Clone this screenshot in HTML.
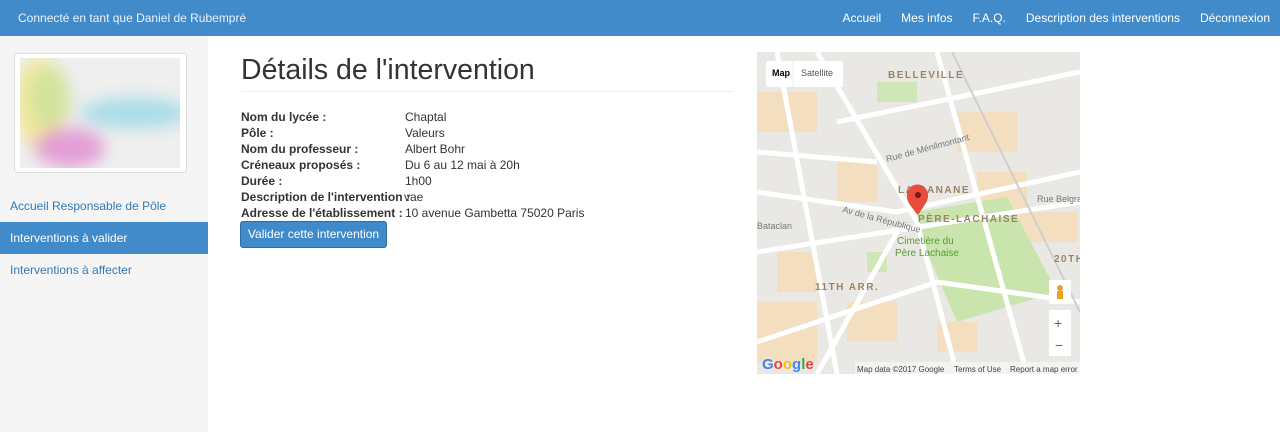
<!DOCTYPE html>
<html><head><meta charset="utf-8"><style>
*{margin:0;padding:0;box-sizing:border-box}
body{width:1280px;height:432px;overflow:hidden;font-family:"Liberation Sans",sans-serif;background:#fff;position:relative;font-size:12px;color:#333}
.nav{position:absolute;left:0;top:0;width:1280px;height:36px;background:#428bca;color:#fff;font-size:12px}
.nav .l{position:absolute;left:18px;top:11px;color:#eaf2fa}
.nav .r{position:absolute;right:10px;top:11px;color:#fff}
.nav .r span{margin-left:20px}
.side{position:absolute;left:0;top:36px;width:208px;height:396px;background:#f5f5f5}
.thumb{position:absolute;left:14px;top:17px;width:173px;height:120px;background:#fff;border:1px solid #ddd;border-radius:3px;overflow:hidden}
.thumb .i{position:absolute;left:5px;top:4px;width:160px;height:110px;background:#efefef;overflow:hidden}
.blob{position:absolute;border-radius:50%;filter:blur(8px)}
.side a{position:absolute;left:0;width:208px;height:32px;padding:9px 10px;color:#337ab7;font-size:12px;text-decoration:none}
.side a.act{background:#428bca;color:#fff}
h1{position:absolute;left:241px;top:54px;font-size:28.5px;font-weight:400;color:#333;white-space:nowrap}
.hr{position:absolute;left:241px;top:91px;width:493px;border-top:1px solid #eee}
.dl{position:absolute;left:241px;top:109px;line-height:16px;width:500px}
.dl div{position:relative;height:16px;white-space:nowrap}
.dl b{font-weight:bold}
.dl span{position:absolute;left:164px;top:0;white-space:nowrap}
.btn{position:absolute;left:240px;top:221px;width:147px;height:27px;background:#3f8acb;border:1px solid #2e6da4;border-radius:3px;color:#fff;font-size:12px;text-align:center;line-height:25px}
.map{position:absolute;left:757px;top:52px;width:323px;height:322px;overflow:hidden;background:#e8e8e6}
</style></head><body>
<div class="nav"><div class="l">Connecté en tant que Daniel de Rubempré</div>
<div class="r"><span>Accueil</span><span>Mes infos</span><span>F.A.Q.</span><span>Description des interventions</span><span>Déconnexion</span></div></div>
<div class="side">
<div class="thumb"><div class="i">
<div class="blob" style="left:-5px;top:0;width:50px;height:90px;background:#f3e57a;opacity:.7"></div>
<div class="blob" style="left:10px;top:10px;width:40px;height:60px;background:#bde09a;opacity:.6"></div>
<div class="blob" style="left:60px;top:40px;width:110px;height:30px;background:#a8dce8"></div>
<div class="blob" style="left:15px;top:70px;width:70px;height:40px;background:#e08bd0;opacity:.8"></div>
</div></div>
<a style="top:154px">Accueil Responsable de Pôle</a>
<a class="act" style="top:186px">Interventions à valider</a>
<a style="top:218px">Interventions à affecter</a>
</div>
<h1>Détails de l'intervention</h1>
<div class="hr"></div>
<div class="dl">
<div><b>Nom du lycée :</b><span>Chaptal</span></div>
<div><b>Pôle :</b><span>Valeurs</span></div>
<div><b>Nom du professeur :</b><span>Albert Bohr</span></div>
<div><b>Créneaux proposés :</b><span>Du 6 au 12 mai à 20h</span></div>
<div><b>Durée :</b><span>1h00</span></div>
<div><b>Description de l'intervention :</b><span style="left:163px">vae</span></div>
<div><b>Adresse de l'établissement :</b><span>10 avenue Gambetta 75020 Paris</span></div>
</div>
<div class="btn">Valider cette intervention</div>
<div class="map">
<svg width="323" height="322" viewBox="0 0 323 322" font-family="Liberation Sans" >
<rect width="323" height="322" fill="#e9e8e5"/>
<g fill="#f3dfbf">
<rect x="0" y="40" width="60" height="40"/><rect x="200" y="60" width="60" height="40"/><rect x="20" y="200" width="40" height="40"/><rect x="220" y="120" width="50" height="40"/><rect x="0" y="250" width="60" height="60"/><rect x="90" y="250" width="50" height="40"/><rect x="260" y="160" width="60" height="30"/><rect x="80" y="110" width="40" height="40"/><rect x="180" y="270" width="40" height="30"/>
</g>
<path d="M160 160 L250 145 L300 240 L200 270 L170 200 Z" fill="#c9e5ad"/>
<rect x="120" y="30" width="40" height="20" fill="#cfe7b7"/>
<rect x="110" y="200" width="20" height="20" fill="#cfe7b7"/>
<g stroke="#fff" stroke-width="5" fill="none">
<path d="M60 0 L160 170 L200 322"/><path d="M0 140 L140 160 L323 120"/><path d="M0 200 L323 150"/><path d="M80 70 L323 20"/><path d="M180 0 L270 322"/><path d="M0 290 L180 230 L323 250"/><path d="M20 0 L80 322"/><path d="M140 180 L60 322"/><path d="M0 100 L120 110"/>
</g>
<path d="M195 0 L323 260" stroke="#cfcfcf" stroke-width="2"/>
<g font-size="10" font-weight="bold" fill="#9a8468" letter-spacing="1.5">
<text x="131" y="26">BELLEVILLE</text><text x="141" y="141">LA BANANE</text><text x="161" y="170">PÈRE-LACHAISE</text><text x="58" y="238">11TH ARR.</text><text x="297" y="210">20TH</text>
</g>
<g font-size="9" fill="#777">
<text x="0" y="177">Bataclan</text><text x="85" y="160" transform="rotate(15 85 160)">Av de la République</text><text x="130" y="110" transform="rotate(-15 130 110)">Rue de Ménilmontant</text><text x="280" y="150">Rue Belgrand</text>
</g>
<text x="140" y="192" font-size="10" fill="#5a9a3a">Cimetière du</text><text x="138" y="204" font-size="10" fill="#5a9a3a">Père Lachaise</text>
<path d="M161 163 C150 150 150 148 150 143 A10 10 0 1 1 171 143 C171 148 170 150 161 163Z" fill="#e74c3c"/><circle cx="161" cy="143" r="3" fill="#7a1a12"/>
<rect x="9" y="9" width="77" height="26" fill="#fff" rx="2"/><line x1="36" y1="9" x2="36" y2="35" stroke="#eee"/>
<text x="15" y="24" font-size="9" font-weight="bold" fill="#000">Map</text><text x="44" y="24" font-size="9" fill="#555">Satellite</text>
<rect x="292" y="228" width="22" height="24" fill="#fff"/><circle cx="303" cy="236" r="3" fill="#f0a020"/><rect x="300" y="239" width="6" height="8" fill="#f0a020"/>
<rect x="292" y="258" width="22" height="46" fill="#fff"/><text x="297" y="276" font-size="14" fill="#666">+</text><text x="298" y="298" font-size="14" fill="#666">−</text>
<text x="5" y="317" font-size="15" font-weight="bold" fill="#4285f4">G<tspan fill="#ea4335">o</tspan><tspan fill="#fbbc05">o</tspan><tspan fill="#4285f4">g</tspan><tspan fill="#34a853">l</tspan><tspan fill="#ea4335">e</tspan></text>
<rect x="98" y="310" width="225" height="12" fill="#f5f5f5" opacity=".8"/>
<text x="100" y="320" font-size="8" fill="#444">Map data ©2017 Google</text><text x="197" y="320" font-size="8" fill="#444">Terms of Use</text><text x="253" y="320" font-size="8" fill="#444">Report a map error</text>
</svg></div>
</body></html>
